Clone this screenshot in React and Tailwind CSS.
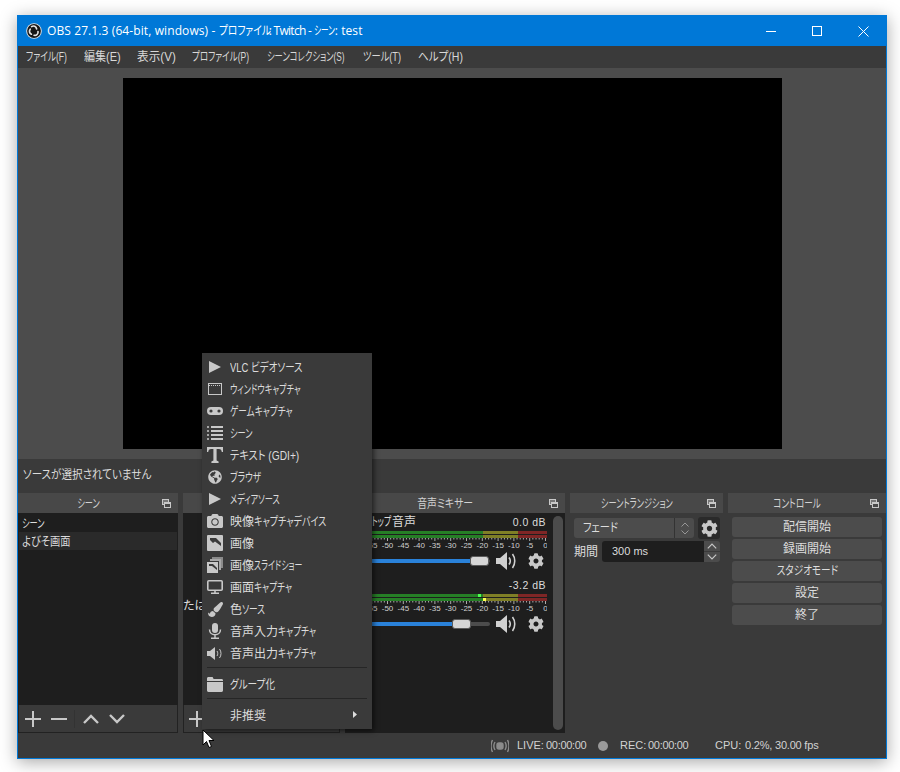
import { FaCog, FaGlobeAmericas, FaPaintBrush, FaCamera } from 'react-icons/fa';

const jp = "font-['Liberation_Sans','Noto_Sans_CJK_JP',sans-serif] [font-feature-settings:'palt'] text-[12px] leading-none whitespace-nowrap";
const ic = '#c8c8c8';

// squeezed run of text: the kana in the reference are much narrower than Noto's
function Sq({ s, o = 'origin-left', children }) {
  return <span className={`inline-block ${o} ${s}`}>{children}</span>;
}

function FloatIcon() {
  return (
    <svg width="9" height="9" viewBox="0 0 9 9" className="absolute right-[7px] top-[6px]" fill="none" stroke="#c8c8c8">
      <rect x="0.5" y="0.5" width="6" height="5" fill="#777" />
      <rect x="2.5" y="3.5" width="6" height="5" fill="#484848" />
      <path d="M2.5 4h6" strokeWidth="2" />
    </svg>
  );
}

function DockTitle({ title, s = '', noIcon }) {
  return (
    <div className={`relative h-5 shrink-0 bg-[#484848] flex items-center justify-center pr-[19px] pt-px text-[#d2d2d2] ${jp}`}>
      {title && <Sq s={s} o="origin-center">{title}</Sq>}
      {!noIcon && <FloatIcon />}
    </div>
  );
}

function Plus() {
  return <svg width="16" height="16" viewBox="0 0 16 16" stroke="#c8c8c8" strokeWidth="2"><path d="M8 0v16M0 8h16" /></svg>;
}
function Minus() {
  return <svg width="16" height="16" viewBox="0 0 16 16" stroke="#c8c8c8" strokeWidth="2"><path d="M0 8h16" /></svg>;
}
function Chevron({ up, w = 16, h = 10, color = '#c8c8c8', sw = 2.4 }) {
  return (
    <svg width={w} height={h} viewBox="0 0 16 10" fill="none" stroke={color} strokeWidth={sw}>
      <path d={up ? 'M1 9l7-7 7 7' : 'M1 1l7 7 7-7'} />
    </svg>
  );
}

function Speaker() {
  return (
    <svg width="22" height="18" viewBox="0 0 22 18" fill="none" className="shrink-0">
      <path d="M0 6h4l7-6v18l-7-6H0z" fill="#d0d0d0" />
      <path d="M13 5.5c1.5 2 1.5 5 0 7" stroke="#d0d0d0" strokeWidth="1.6" />
      <path d="M16.5 2c3 4 3 10 0 14" stroke="#d0d0d0" strokeWidth="1.6" />
    </svg>
  );
}

// 5 dB = 15.8px, 0 dB sits at x=199
function Meter() {
  const ticks = [];
  for (let db = 0; db <= 60; db++) {
    const x = 199.5 - db * 3.16;
    if (x > 25) ticks.push(<path key={db} d={`M${x} 7v${db % 5 === 0 ? 3 : 1.5}`} stroke="#d0d0d0" strokeWidth="0.8" />);
  }
  const labels = [0, -5, -10, -15, -20, -25, -30, -35, -40, -45, -50, -55];
  return (
    <svg width="201" height="18" viewBox="0 0 201 18" className="block">
      <rect x="0" y="0" width="137" height="3" fill="#267f26" />
      <rect x="0" y="4" width="137" height="3" fill="#267f26" />
      <rect x="137" y="0" width="35" height="3" fill="#7f7f26" />
      <rect x="137" y="4" width="35" height="3" fill="#7f7f26" />
      <rect x="172" y="0" width="29" height="3" fill="#7f2626" />
      <rect x="172" y="4" width="29" height="3" fill="#7f2626" />
      {ticks}
      {labels.map((l) => (
        <text key={l} x={199.5 + l * 3.16} y="17" textAnchor="middle" fontSize="8" fill="#d0d0d0" fontFamily="Liberation Sans">{l}</text>
      ))}
    </svg>
  );
}

function Strip({ name, db, fill, thumb, peak }) {
  return (
    <div className="h-[63px] shrink-0">
      <div className={`h-[18px] pl-[4px] flex items-center justify-between text-[#dcdcdc] ${jp}`}>
        <span>{name}</span>
        <span className="mr-[1px] tracking-[0.5px] text-[10.5px]">{db}</span>
      </div>
      <div className="relative h-[18px]">
        <Meter />
        {peak && <div className="absolute left-[132px] top-0 w-[3px] h-[3px] bg-[#4fff4f]" />}
        {peak && <div className="absolute left-[137px] top-[4px] w-[3px] h-[3px] bg-[#ffff4f]" />}
      </div>
      <div className="h-[24px] pl-[4px] flex items-center">
        <div className="relative w-[140px] h-[4px] bg-[#4c4c4c] rounded-sm">
          <div className={`h-full bg-[#2a82da] ${fill}`} />
          <div className={`absolute top-[-3px] w-[19px] h-[10px] rounded-[3px] bg-[#d6d6d6] border border-[#5a5a5a] ${thumb}`} />
        </div>
        <div className="ml-[6px]"><Speaker /></div>
        <FaCog className="ml-[10px] shrink-0 text-[#c8c8c8]" size={16} />
      </div>
    </div>
  );
}

function CtrlBtn({ children }) {
  return (
    <div className={`h-5 rounded-[3px] bg-[#4c4c4c] flex items-center justify-center text-[#dcdcdc] ${jp}`}>
      {children}
    </div>
  );
}

function ObsLogo() {
  return (
    <svg width="16" height="16" viewBox="0 0 16 16" className="shrink-0">
      <circle cx="8" cy="8" r="7.8" fill="#e4e4e4" />
      <circle cx="8" cy="8" r="6.9" fill="#161616" />
      <g fill="none" stroke="#e4e4e4" strokeWidth="1.7" strokeLinecap="round">
        <path d="M5.600 3.600a3.200 3.200 0 0 1 5 2.200" />
        <path d="M12 8.500a3.200 3.200 0 0 1-3.900 3.800" />
        <path d="M5.400 11.200a3.200 3.200 0 0 1-1.200-5" />
      </g>
    </svg>
  );
}

const Play = () => <svg width="16" height="16" viewBox="0 0 16 16"><path d="M2 2l12 6-12 6z" fill={ic} /></svg>;
const Win = () => <svg width="14" height="12" viewBox="0 0 14 12" fill="none" stroke={ic}><rect x="0.5" y="0.5" width="13" height="11" /><path d="M1 2.500h12" strokeDasharray="1 1" /></svg>;
const Game = () => (
  <svg width="16" height="9" viewBox="0 0 16 9">
    <rect x="0" y="0" width="16" height="8" rx="4" fill={ic} />
    <circle cx="4" cy="4" r="1.6" fill="#3a3a3a" /><circle cx="12" cy="4" r="1.6" fill="#3a3a3a" />
  </svg>
);
const ListIc = () => (
  <svg width="16" height="14" viewBox="0 0 16 14" stroke={ic} strokeWidth="2">
    <path d="M4 1h12M4 5h12M4 9h12M4 13h12" /><path d="M0 1h2M0 5h2M0 9h2M0 13h2" strokeWidth="1.4" />
  </svg>
);
const TIc = () => <svg width="16" height="16" viewBox="0 0 16 16"><path d="M0 0h16v5h-1.200c-.3-2-1-3-3-3H9.600v11.500l2 1v1.500H4.400v-1.500l2-1V2H4.200c-2 0-2.700 1-3 3H0z" fill={ic} /></svg>;
const Img = () => (
  <svg width="16" height="16" viewBox="0 0 16 16">
    <rect width="16" height="16" rx="1" fill={ic} />
    <path d="M3 3h6l5 5v3L8 6.500 6 8 3 5z" fill="#3a3a3a" />
  </svg>
);
const Slides = () => (
  <svg width="16" height="16" viewBox="0 0 16 16">
    <path d="M5 0h11v11h-2V2H5z" fill="#8a8a8a" /><path d="M3 2h11v11h-2V4H3z" fill="#a8a8a8" />
    <rect x="0" y="5" width="11" height="11" fill={ic} /><path d="M2 7h4l4 4v2L5 9H2z" fill="#3a3a3a" />
  </svg>
);
const Monitor = () => <svg width="16" height="14" viewBox="0 0 16 14" fill="none" stroke={ic}><rect x="0.800" y="0.800" width="14.400" height="9.400" rx="1" strokeWidth="1.6" /><path d="M8 11v2M4 13.300h8" strokeWidth="1.6" /></svg>;
const Mic = () => (
  <svg width="14" height="16" viewBox="0 0 14 16" fill="none">
    <rect x="4" y="0" width="6" height="10" rx="3" fill={ic} />
    <path d="M1.500 6.500c0 7 11 7 11 0M7 12v3M3 15.300h8" stroke={ic} strokeWidth="1.500" />
  </svg>
);
const SpeakerSm = () => (
  <svg width="16" height="13" viewBox="0 0 16 13" fill="none">
    <path d="M0 4h3l5-4v13l-5-4H0z" fill={ic} />
    <path d="M10 4c1 1.500 1 3.500 0 5M12.500 2c2 2.500 2 6.500 0 9" stroke={ic} />
  </svg>
);
const Folder = () => <svg width="16" height="15" viewBox="0 0 16 15"><path d="M0 1.500C0 .7.600 0 1.400 0h4.200l1 2h8c.8 0 1.400.6 1.400 1.400V4H0z" fill={ic} /><path d="M0 5h16v8.600c0 .8-.6 1.400-1.400 1.400H1.400C.6 15 0 14.400 0 13.600z" fill={ic} /></svg>;

const menuItems = [
  { icon: <Play />, label: <Sq s="scale-x-[0.79]">VLC ビデオソース</Sq> },
  { icon: <Win />, label: <Sq s="scale-x-[0.68]">ウィンドウキャプチャ</Sq> },
  { icon: <Game />, label: <Sq s="scale-x-[0.72]">ゲームキャプチャ</Sq> },
  { icon: <ListIc />, label: <Sq s="scale-x-[0.68]">シーン</Sq> },
  { icon: <TIc />, label: <Sq s="scale-x-[0.85]">テキスト (GDI+)</Sq> },
  { icon: <FaGlobeAmericas size={14} color={ic} />, label: <Sq s="scale-x-[0.72]">ブラウザ</Sq> },
  { icon: <Play />, label: <Sq s="scale-x-[0.68]">メディアソース</Sq> },
  { icon: <FaCamera size={16} color={ic} />, label: <>映像<Sq s="scale-x-[0.75]">キャプチャデバイス</Sq></> },
  { icon: <Img />, label: '画像' },
  { icon: <Slides />, label: <>画像<Sq s="scale-x-[0.66]">スライドショー</Sq></> },
  { icon: <Monitor />, label: <>画面<Sq s="scale-x-[0.72]">キャプチャ</Sq></> },
  { icon: <FaPaintBrush size={15} color={ic} />, label: <>色<Sq s="scale-x-[0.72]">ソース</Sq></> },
  { icon: <Mic />, label: <>音声入力<Sq s="scale-x-[0.72]">キャプチャ</Sq></> },
  { icon: <SpeakerSm />, label: <>音声出力<Sq s="scale-x-[0.72]">キャプチャ</Sq></> },
];

function MenuRow({ icon, label }) {
  return (
    <div className={`h-[22px] flex items-center text-[#dcdcdc] ${jp}`}>
      <span className="w-[28px] pl-[5px] shrink-0"><span className="w-[16px] flex justify-center">{icon}</span></span>
      <span className="pt-[2px]">{label}</span>
    </div>
  );
}

function SourceMenu() {
  return (
    <div className="absolute left-[202px] top-[353px] w-[170px] h-[376px] pt-[3px] bg-[#3a3a3a] shadow-[2px_2px_5px_rgba(0,0,0,0.55)]">
      {menuItems.map((m, i) => <MenuRow key={i} {...m} />)}
      <div className="mx-[5px] mt-[3px] mb-[5px] h-px bg-[#262626]" />
      <MenuRow icon={<Folder />} label={<Sq s="scale-x-[0.8]">グループ化</Sq>} />
      <div className="mx-[5px] mt-[3px] mb-[5px] h-px bg-[#262626]" />
      <div className="relative">
        <MenuRow icon={null} label="非推奨" />
        <svg width="4" height="7" viewBox="0 0 4 7" className="absolute right-[15px] top-[7px]"><path d="M0 0l4 3.500-4 3.500z" fill="#dcdcdc" /></svg>
      </div>
    </div>
  );
}

function Cursor() {
  return (
    <svg width="13" height="20" viewBox="0 0 13 20" className="absolute left-[202px] top-[729px]">
      <path d="M1 1v15l3.500-3.500 2.500 6 2.500-1-2.500-6h5z" fill="#fff" stroke="#000" strokeWidth="1" />
    </svg>
  );
}

function MenuLabel({ w, s, children }) {
  return <span className={`block ${w}`}><Sq s={s}>{children}</Sq></span>;
}

export default function App() {
  return (
    <div className="relative w-[900px] h-[772px] overflow-hidden bg-white pl-[17px] pt-[15px]">
      <div className="w-[870px] h-[744px] flex flex-col bg-[#3a3a3a] border border-[#0078d7] shadow-[0_3px_16px_rgba(0,0,0,0.35)]">
        {/* title bar */}
        <div className="h-[30px] shrink-0 bg-[#0078d7] flex items-center pl-[8px] text-white">
          <ObsLogo />
          <span className="ml-[5px] font-['Open_Sans','Noto_Sans_CJK_JP',sans-serif] [font-feature-settings:'palt'] text-[12px] tracking-[0.1px] whitespace-nowrap">
            OBS 27.1.3 (64-bit, windows) - <span className="inline-block w-[50px]"><Sq s="scale-x-[0.8]">プロファイル</Sq></span><span className="tracking-[-0.7px]">: Twitch - </span><span className="inline-block w-[21px]"><Sq s="scale-x-[0.63]">シーン</Sq></span>: test
          </span>
          <div className="ml-auto flex items-center">
            <div className="w-[46px] flex justify-center"><div className="w-[10px] h-px bg-white" /></div>
            <div className="w-[46px] flex justify-center"><div className="w-[10px] h-[10px] border border-white" /></div>
            <div className="w-[46px] flex justify-center">
              <svg width="11" height="11" viewBox="0 0 11 11" stroke="#fff"><path d="M0.500 0.500l10 10M10.500 0.500l-10 10" /></svg>
            </div>
          </div>
        </div>
        {/* menu bar */}
        <div className={`h-[22px] shrink-0 bg-[#3a3a3a] flex items-center pl-[8px] gap-[17px] text-[#d8d8d8] ${jp}`}>
          <MenuLabel w="w-[41px]" s="scale-x-[0.72]">ファイル(F)</MenuLabel>
          <MenuLabel w="w-[36px]" s="scale-x-[0.92]">編集(E)</MenuLabel>
          <MenuLabel w="w-[38px]" s="scale-x-[0.97]">表示(V)</MenuLabel>
          <MenuLabel w="w-[58px]" s="scale-x-[0.71]">プロファイル(P)</MenuLabel>
          <MenuLabel w="w-[79px]" s="scale-x-[0.69]">シーンコレクション(S)</MenuLabel>
          <MenuLabel w="w-[38px]" s="scale-x-[0.77]">ツール(T)</MenuLabel>
          <MenuLabel w="w-[44px]" s="scale-x-[0.88]">ヘルプ(H)</MenuLabel>
        </div>
        {/* preview */}
        <div className="h-[391px] shrink-0 bg-[#4c4c4c] flex items-center justify-center">
          <div className="w-[659px] h-[371px] bg-black" />
        </div>
        {/* selected source bar */}
        <div className={`h-[34px] shrink-0 flex items-center pl-[5px] pb-[2px] text-[#dcdcdc] ${jp}`}>
          <Sq s="scale-x-[0.88]">ソースが選択されていません</Sq>
        </div>
        {/* docks */}
        <div className="h-[240px] shrink-0 flex gap-[5px]">
          <div className="w-[160px] flex flex-col">
            <DockTitle title="シーン" s="scale-x-[0.68]" />
            <div className="flex-1 bg-[#1e1e1e] pt-px px-px">
              <div className={`h-[18px] flex items-center pl-[3px] pt-px text-[#dcdcdc] ${jp}`}><Sq s="scale-x-[0.68]">シーン</Sq></div>
              <div className={`h-[18px] flex items-center pl-[3px] pt-px bg-[#2a2a2a] text-[#dcdcdc] ${jp}`}><Sq s="scale-x-[0.85]">よびそ画面</Sq></div>
            </div>
            <div className="h-[28px] shrink-0 border border-t-0 border-[#222] flex items-center pl-[6px]">
              <Plus />
              <div className="ml-[10px]"><Minus /></div>
              <div className="ml-[7px] w-px h-[18px] bg-[#333]" />
              <div className="ml-[8px]"><Chevron up /></div>
              <div className="ml-[10px]"><Chevron /></div>
            </div>
          </div>
          <div className="w-[157px] flex flex-col">
            <DockTitle noIcon />
            <div className={`flex-1 bg-[#1e1e1e] flex items-center pb-[6px] text-[#dcdcdc] ${jp}`}>たは</div>
            <div className="h-[28px] shrink-0 border border-t-0 border-[#222] flex items-center pl-[5px]">
              <Plus />
            </div>
          </div>
          <div className="w-[220px] flex flex-col">
            <DockTitle title="音声ミキサー" s="scale-x-[0.82]" />
            <div className="flex-1 bg-[#1e1e1e] flex">
              <div className="w-[202px] pl-px flex flex-col">
                <Strip name={<><span className="inline-block w-[42px]"><Sq s="scale-x-[0.66]">デスクトップ</Sq></span>音声</>} db="0.0 dB" fill="w-[120px]" thumb="left-[120px]" />
                <Strip name={<Sq s="scale-x-[0.5]">マイク</Sq>} db="-3.2 dB" fill="w-[102px]" thumb="left-[102px]" peak />
              </div>
              <div className="ml-[6px] mt-[3px] mb-[3px] w-[10px] rounded-[5px] bg-[#4c4c4c]" />
            </div>
          </div>
          <div className="w-[153px] flex flex-col">
            <DockTitle title="シーントランジション" s="scale-x-[0.68]" />
            <div className="pl-[4px] pr-[3px] pt-[4px]">
              <div className="flex items-center">
                <div className={`w-[120px] h-5 rounded-[3px] bg-[#4c4c4c] flex items-center pl-[9px] text-[#dcdcdc] ${jp}`}>
                  <Sq s="scale-x-[0.85]">フェード</Sq>
                  <div className="ml-auto w-[20px] h-full border-l border-[#333] flex flex-col items-center justify-center gap-[3px]">
                    <Chevron up w={8} h={5} sw={1.6} color="#aaa" />
                    <Chevron w={8} h={5} sw={1.6} color="#aaa" />
                  </div>
                </div>
                <div className="ml-[4px] w-[22px] h-[22px] rounded-[3px] bg-[#2a2a2a] flex items-center justify-center">
                  <FaCog size={17} color="#c8c8c8" />
                </div>
              </div>
              <div className="mt-[2px] flex items-center">
                <span className={`w-[28px] text-[#dcdcdc] ${jp}`}>期間</span>
                <div className="w-[102px] h-[21px] rounded-l-[3px] bg-[#1e1e1e] flex items-center pl-[10px] text-[#dcdcdc] font-['Liberation_Sans',sans-serif] text-[11px]">300 ms</div>
                <div className="w-[16px] h-[21px] flex flex-col gap-px">
                  <div className="flex-1 bg-[#4c4c4c] rounded-tr-[3px] flex items-center justify-center"><Chevron up w={12} h={6} sw={2} /></div>
                  <div className="flex-1 bg-[#4c4c4c] rounded-br-[3px] flex items-center justify-center"><Chevron w={12} h={6} sw={2} /></div>
                </div>
              </div>
            </div>
          </div>
          <div className="flex-1 flex flex-col">
            <DockTitle title="コントロール" s="scale-x-[0.72]" />
            <div className="pt-[4px] px-[4px] flex flex-col gap-[2px]">
              <CtrlBtn>配信開始</CtrlBtn>
              <CtrlBtn>録画開始</CtrlBtn>
              <CtrlBtn><Sq s="scale-x-[0.8]" o="origin-center">スタジオモード</Sq></CtrlBtn>
              <CtrlBtn>設定</CtrlBtn>
              <CtrlBtn>終了</CtrlBtn>
            </div>
          </div>
        </div>
        {/* status bar */}
        <div className="flex-1 flex items-center pl-[473px] text-[#d2d2d2] font-['Liberation_Sans',sans-serif] text-[11px] whitespace-nowrap">
          <svg width="18" height="14" viewBox="0 0 18 14" fill="none" stroke="#8c8c8c" strokeWidth="1.4" className="shrink-0">
            <rect x="6" y="4" width="6" height="6" rx="2" fill="#8c8c8c" />
            <path d="M4 3c-1.500 2.500-1.500 5.500 0 8M14 3c1.500 2.500 1.500 5.500 0 8M1.500 1c-2 4-2 8 0 12M16.500 1c2 4 2 8 0 12" />
          </svg>
          <span className="ml-[8px] w-[29px]">LIVE:</span>
          <span className="w-[40px] tracking-[-0.3px]">00:00:00</span>
          <span className="ml-[12px] w-[10px] h-[10px] rounded-full bg-[#9a9a9a] shrink-0" />
          <span className="ml-[12px] w-[28px]">REC:</span>
          <span className="w-[40px] tracking-[-0.3px]">00:00:00</span>
          <span className="ml-[27px] w-[30px]">CPU:</span>
          <span className="tracking-[-0.2px]">0.2%, 30.00 fps</span>
        </div>
      </div>
      <SourceMenu />
      <Cursor />
    </div>
  );
}
